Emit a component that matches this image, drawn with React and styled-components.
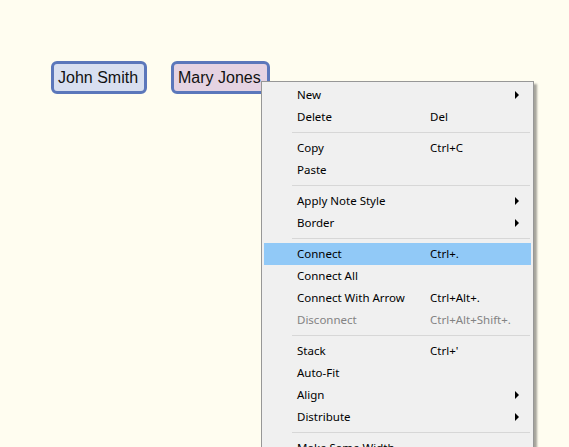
import React from 'react'
import styled, { createGlobalStyle } from 'styled-components'

const Global = createGlobalStyle`
    html, body {
        margin: 0;
        padding: 0;
        background: #fffdf0;
        overflow: hidden;
    }
`

const Canvas = styled.div`
    position: relative;
    width: 569px;
    height: 447px;
    background: #fffdf0;
    overflow: hidden;
`

const Node = styled.div`
    position: absolute;
    left: ${ props => props.x }px;
    top: ${ props => props.y }px;
    box-sizing: border-box;
    height: 33px;
    padding: 0 6px 0 4px;
    display: flex;
    align-items: center;
    border: 3px solid #5b77bb;
    border-radius: 6px;
    background: ${ props => props.bg };
    font-family: "Liberation Sans", Arial, sans-serif;
    font-size: 16px;
    color: #111;
`

const Menu = styled.div`
    position: absolute;
    left: 261px;
    top: 81px;
    width: 273px;
    box-sizing: border-box;
    padding: 2px;
    background: #f0f0f0;
    border: 1px solid #979797;
    box-shadow: 3px 3px 2px rgba(0, 0, 0, 0.35);
    font-family: "Noto Sans", "Segoe UI", sans-serif;
    font-size: 11.5px;
`

const Row = styled.div`
    display: grid;
    grid-template-columns: 133px 1fr 16px;
    align-items: center;
    box-sizing: border-box;
    height: 22px;
    padding: 0 0 2px 33px;
    background: ${ props => props.active ? '#91c9f7' : 'transparent' };
    color: ${ props => props.disabled ? '#838383' : '#000' };
`

const Label = styled.span`
    white-space: nowrap;
`

const Shortcut = styled.span`
    white-space: nowrap;
`

const Arrow = styled.span`
    width: 0;
    height: 0;
    margin-top: 2px;
    border-top: 4px solid transparent;
    border-bottom: 4px solid transparent;
    border-left: 4px solid #000;
`

const Separator = styled.div`
    height: 1px;
    margin: 4px 1px 4px 28px;
    background: #d7d7d7;
`

const groups = [
    [
        { label: 'New', sub: true },
        { label: 'Delete', key: 'Del' },
    ],
    [
        { label: 'Copy', key: 'Ctrl+C' },
        { label: 'Paste' },
    ],
    [
        { label: 'Apply Note Style', sub: true },
        { label: 'Border', sub: true },
    ],
    [
        { label: 'Connect', key: 'Ctrl+.', active: true },
        { label: 'Connect All' },
        { label: 'Connect With Arrow', key: 'Ctrl+Alt+.' },
        { label: 'Disconnect', key: 'Ctrl+Alt+Shift+.', disabled: true },
    ],
    [
        { label: 'Stack', key: "Ctrl+'" },
        { label: 'Auto-Fit' },
        { label: 'Align', sub: true },
        { label: 'Distribute', sub: true },
    ],
    [
        { label: 'Make Same Width' },
        { label: 'Make Same Height' },
    ],
]

export default function App() {
    return (
        <Canvas>
            <Global />
            <Node x={ 51 } y={ 61 } bg="#d8dff0">John Smith</Node>
            <Node x={ 171 } y={ 61 } bg="#e5d3e2">Mary Jones</Node>
            <Menu>
                { groups.map((group, gi) => (
                    <React.Fragment key={ gi }>
                        { gi > 0 && <Separator /> }
                        { group.map(item => (
                            <Row key={ item.label } active={ item.active } disabled={ item.disabled }>
                                <Label>{ item.label }</Label>
                                <Shortcut>{ item.key }</Shortcut>
                                { item.sub ? <Arrow /> : <span /> }
                            </Row>
                        )) }
                    </React.Fragment>
                )) }
            </Menu>
        </Canvas>
    )
}
